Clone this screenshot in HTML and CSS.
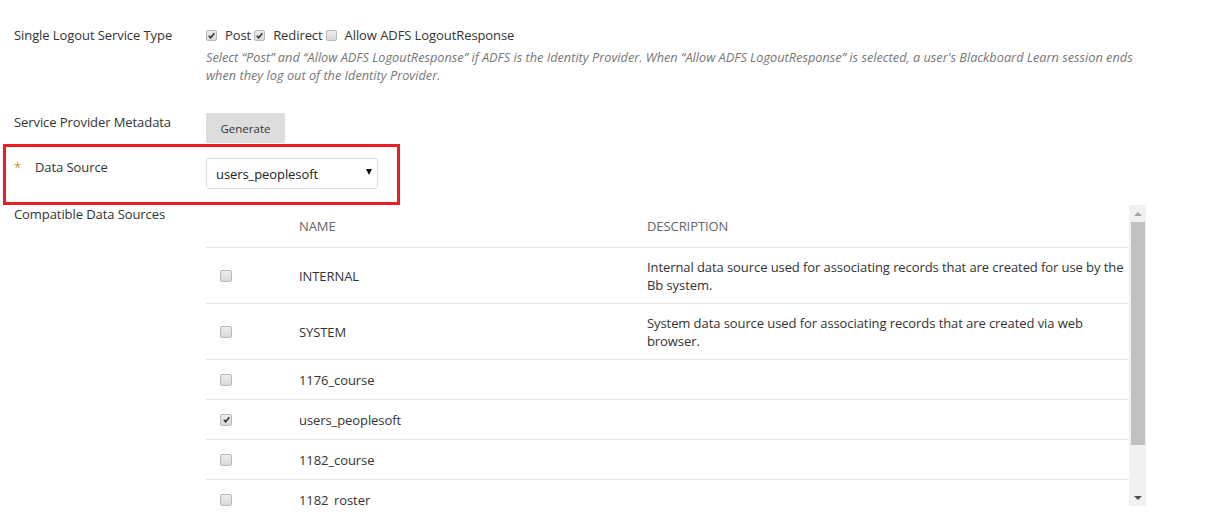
FILE: index.html
```html
<!DOCTYPE html>
<html lang="en">
<head>
    <meta charset="UTF-8">
    <title>SAML Settings</title>
    <link rel="stylesheet" href="styles.css">
</head>
<body>
    <div class="page">
        <div class="form-row slo">
            <div class="label">Single Logout Service Type</div>
            <div class="field">
                <div class="checks">
                    <span class="opt"><span class="cb checked"><svg viewBox="0 0 10 10"><path d="M2 5.2 L4 7.4 L8.2 2.4" fill="none" stroke="#333" stroke-width="1.8"/></svg></span>Post</span>
                    <span class="opt"><span class="cb checked"><svg viewBox="0 0 10 10"><path d="M2 5.2 L4 7.4 L8.2 2.4" fill="none" stroke="#333" stroke-width="1.8"/></svg></span>Redirect</span>
                    <span class="opt"><span class="cb"></span>Allow ADFS LogoutResponse</span>
                </div>
                <p class="help">Select “Post” and “Allow ADFS LogoutResponse” if ADFS is the Identity Provider. When “Allow ADFS LogoutResponse” is selected, a user's Blackboard Learn session ends when they log out of the Identity Provider.</p>
            </div>
        </div>

        <div class="form-row metadata">
            <div class="label">Service Provider Metadata</div>
            <div class="field">
                <button class="btn">Generate</button>
            </div>
        </div>

        <div class="form-row highlight">
            <div class="label"><span class="req">*</span>Data Source</div>
            <div class="field">
                <div class="select">users_peoplesoft<span class="arrow"></span></div>
            </div>
        </div>

        <div class="form-row sources">
            <div class="label">Compatible Data Sources</div>
            <div class="field">
                <div class="table-wrap">
                    <div class="table">
                        <div class="tr head">
                            <div class="td"></div>
                            <div class="td">NAME</div>
                            <div class="td">DESCRIPTION</div>
                        </div>
                        <div class="tr">
                            <div class="td"><span class="cb"></span></div>
                            <div class="td">INTERNAL</div>
                            <div class="td">Internal data source used for associating records that are created for use by the Bb system.</div>
                        </div>
                        <div class="tr">
                            <div class="td"><span class="cb"></span></div>
                            <div class="td">SYSTEM</div>
                            <div class="td">System data source used for associating records that are created via web browser.</div>
                        </div>
                        <div class="tr">
                            <div class="td"><span class="cb"></span></div>
                            <div class="td">1176_course</div>
                            <div class="td"></div>
                        </div>
                        <div class="tr">
                            <div class="td"><span class="cb checked"><svg viewBox="0 0 10 10"><path d="M2 5.2 L4 7.4 L8.2 2.4" fill="none" stroke="#333" stroke-width="1.8"/></svg></span></div>
                            <div class="td">users_peoplesoft</div>
                            <div class="td"></div>
                        </div>
                        <div class="tr">
                            <div class="td"><span class="cb"></span></div>
                            <div class="td">1182_course</div>
                            <div class="td"></div>
                        </div>
                        <div class="tr">
                            <div class="td"><span class="cb"></span></div>
                            <div class="td">1182_roster</div>
                            <div class="td"></div>
                        </div>
                    </div>
                    <div class="scrollbar">
                        <div class="sb-btn"><span class="up"></span></div>
                        <div class="sb-thumb"></div>
                        <div class="sb-btn"><span class="down"></span></div>
                    </div>
                </div>
            </div>
        </div>
    </div>
</body>
</html>
```

FILE: styles.css
```css
body {
    margin: 0;
    font-family: "Open Sans", Arial, sans-serif;
    font-size: 13px;
    letter-spacing: -0.08px;
    color: #333;
    background-color: #fff;
}
.page {
    padding: 26px 0 0 14px;
    border-left: 3px solid #f4f4f4;
    margin-left: -3px;
    height: 523px;
    box-sizing: border-box;
    overflow: hidden;
}
.form-row {
    display: flex;
    align-items: flex-start;
}
.label {
    width: 192px;
    flex-shrink: 0;
    line-height: 18px;
    color: #333;
}
.field {
    width: 940px;
}
.checks {
    display: flex;
    align-items: center;
    height: 18px;
    line-height: 18px;
}
.opt {
    display: flex;
    align-items: center;
    margin-right: 3px;
}
.cb {
    display: inline-flex;
    align-items: center;
    justify-content: center;
    width: 11px;
    height: 11px;
    box-sizing: border-box;
    border: 1px solid #b8b8b8;
    border-radius: 2px;
    background: linear-gradient(#ececec, #d9d9d9);
    margin-right: 8px;
}
.cb svg {
    width: 9px;
    height: 9px;
}
.help {
    margin: 4px 0 0;
    font-size: 12.75px;
    font-style: italic;
    letter-spacing: 0;
    line-height: 18px;
    color: #777;
}
.metadata {
    margin-top: 29px;
}
.btn {
    height: 30px;
    padding: 0 14.5px;
    border: none;
    background-color: #ddd;
    font-family: "Open Sans", Arial, sans-serif;
    font-size: 11.5px;
    color: #333;
}
.highlight {
    margin: 1px 0 0 -11px;
    width: 397px;
    box-sizing: border-box;
    border: 3px solid #ed1c24;
    padding: 11px 0 13px 8px;
}
.req {
    display: inline-block;
    width: 21px;
    color: #d08a2a;
}
.select {
    display: flex;
    align-items: center;
    width: 172px;
    height: 31px;
    box-sizing: border-box;
    border: 1px solid #ddd;
    border-radius: 3px;
    padding: 0 5px 0 9px;
    color: #222;
}
.arrow {
    margin-left: auto;
    margin-top: -3px;
    width: 0;
    height: 0;
    border-left: 3.5px solid transparent;
    border-right: 3.5px solid transparent;
    border-top: 6px solid #111;
}
.table-wrap {
    display: flex;
    height: 301px;
    overflow: hidden;
}
.table {
    width: 923px;
    flex-shrink: 0;
}
.tr {
    display: grid;
    grid-template-columns: 85px 348px 1fr;
    align-items: center;
    min-height: 40px;
    box-sizing: border-box;
    border-bottom: 1px solid #e6e6e6;
}
.td {
    padding: 9.5px 8px;
    line-height: 18px;
    color: #333;
}
.td:first-child {
    padding-left: 14px;
    display: flex;
    align-items: center;
}
.td:last-child {
    padding-right: 0;
}
.tr .cb {
    width: 12px;
    height: 12px;
    margin: 0;
}
.tr.head {
    min-height: 43px;
}
.tr.head .td {
    color: #666;
}
.scrollbar {
    width: 17px;
    display: flex;
    flex-direction: column;
    background-color: #f1f1f1;
}
.sb-btn {
    height: 17px;
    display: flex;
    align-items: center;
    justify-content: center;
}
.sb-thumb {
    height: 223px;
    margin: 0 1px 0 2px;
    background-color: #c1c1c1;
}
.scrollbar .sb-btn:last-child {
    margin-top: auto;
}
.up {
    width: 0;
    height: 0;
    border-left: 4px solid transparent;
    border-right: 4px solid transparent;
    border-bottom: 4px solid #a3a3a3;
}
.down {
    width: 0;
    height: 0;
    border-left: 4px solid transparent;
    border-right: 4px solid transparent;
    border-top: 4px solid #505050;
}
```
